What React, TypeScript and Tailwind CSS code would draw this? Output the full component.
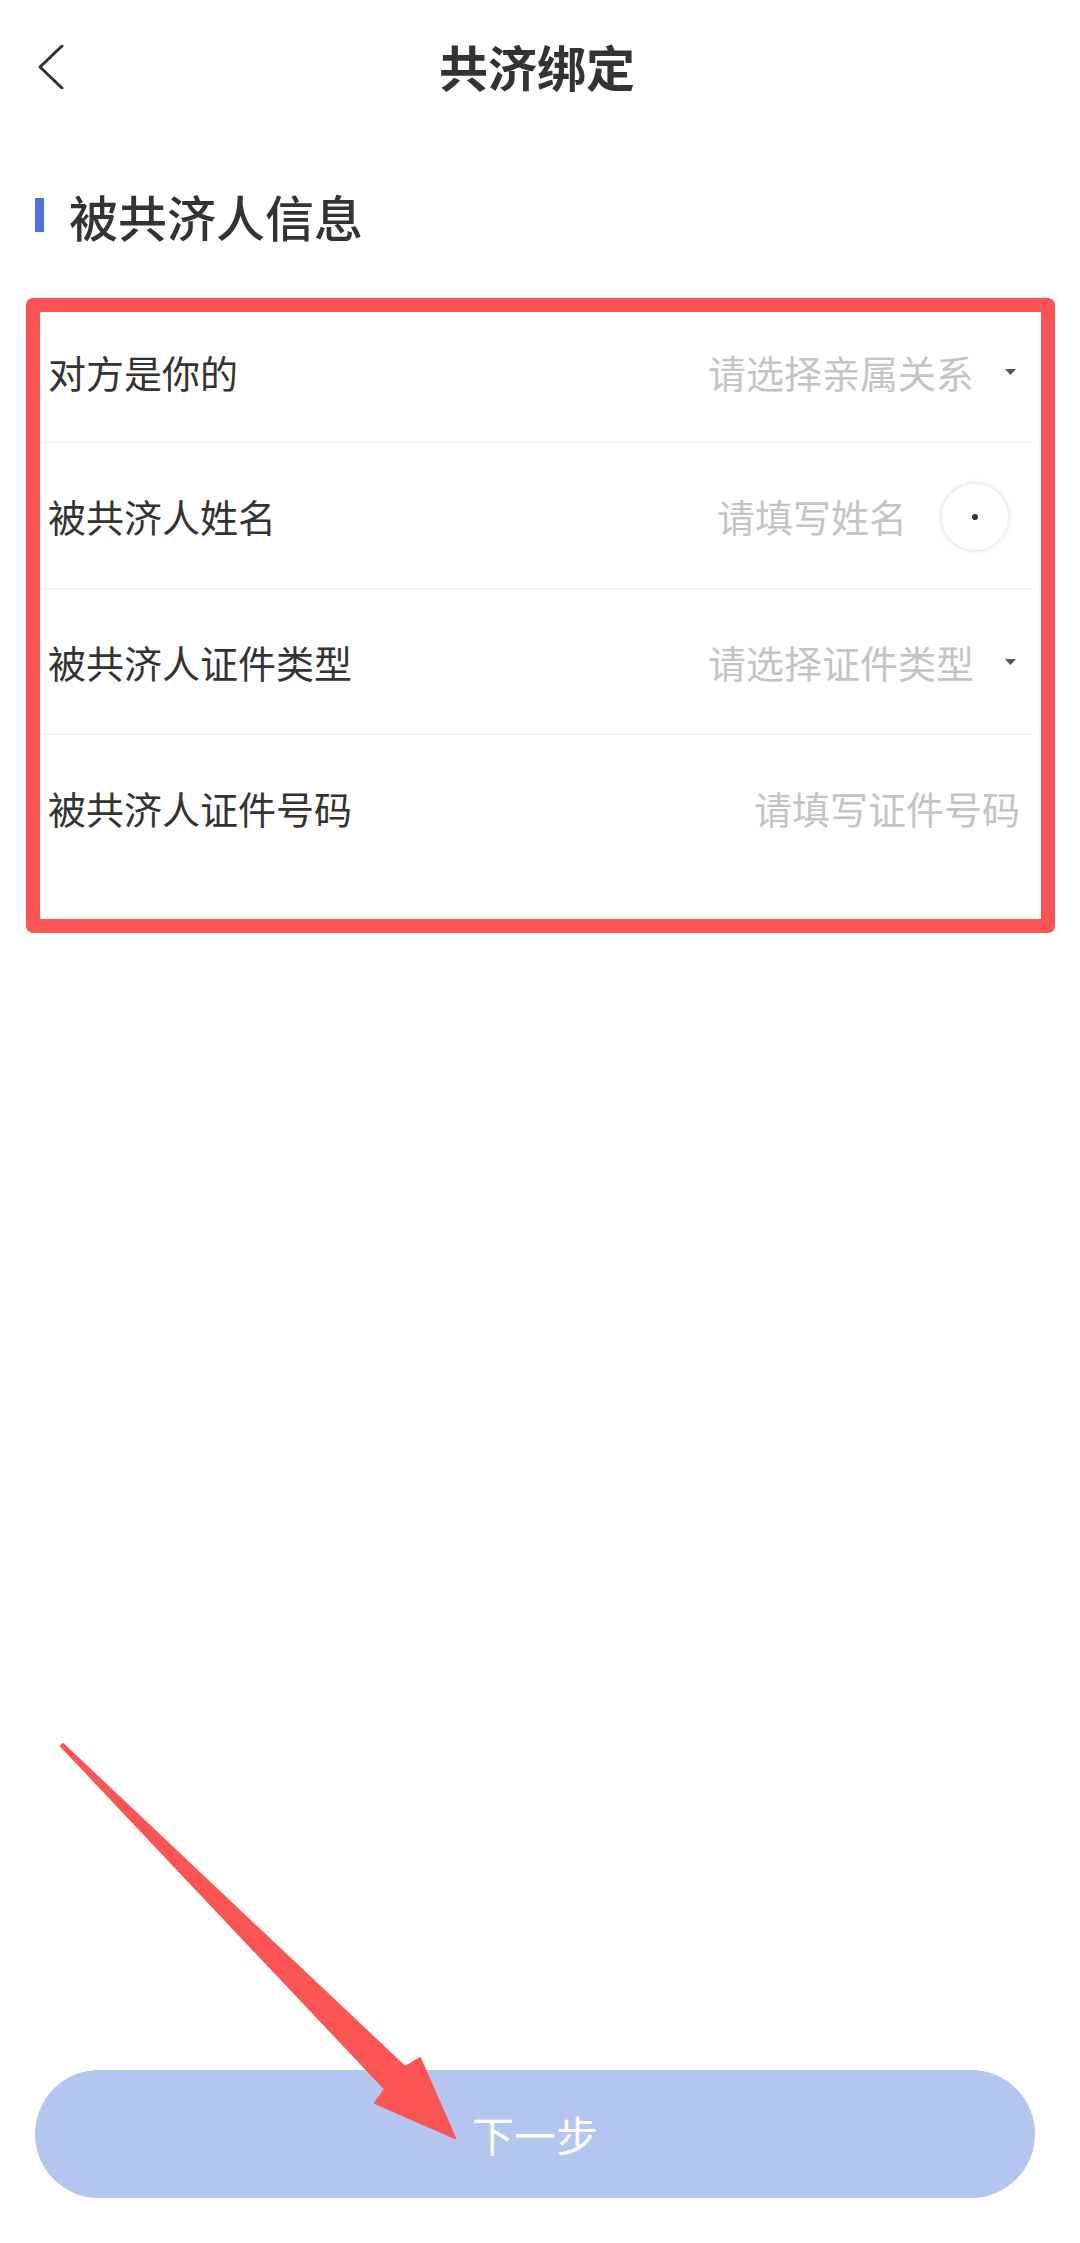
import React from 'react';

type Row = {
  label: string;
  placeholder: string;
  select?: boolean;
};

const rows: Row[] = [
  { label: '对方是你的', placeholder: '请选择亲属关系', select: true },
  { label: '被共济人姓名', placeholder: '请填写姓名' },
  { label: '被共济人证件类型', placeholder: '请选择证件类型', select: true },
  { label: '被共济人证件号码', placeholder: '请填写证件号码' },
];

function Caret() {
  return (
    <svg className="ml-[31px] mr-[4px] h-[6px] w-[11px]" viewBox="0 0 11 6">
      <path d="M0 0H11L5.5 6Z" fill="#555" />
    </svg>
  );
}

function FormRow({ row, index }: { row: Row; index: number }) {
  const first = index === 0;
  const last = index === rows.length - 1;
  return (
    <div
      className={`relative mr-[7px] flex items-center pl-[8px] pr-[14px] ${
        first ? 'h-[131px] pb-[10px]' : last ? 'h-[184px] pb-[38px]' : 'h-[146px]'
      } ${last ? '' : 'border-b border-[#efefef]'}`}
    >
      <span className="text-[38px] leading-none text-[#333]">{row.label}</span>
      <div className="ml-auto flex items-center">
        <span className={`text-[38px] leading-none text-[#c4c4c4] ${index === 1 ? 'mr-[113px]' : ''}`}>
          {row.placeholder}
        </span>
        {row.select && <Caret />}
      </div>
      {index === 1 && (
        // floating assistive button that sits over the name row
        <div className="absolute left-[900px] top-[39px] flex h-[70px] w-[70px] items-center justify-center rounded-full border-2 border-[#eeeef6] bg-white/70 shadow-[0_0_4px_rgba(200,200,230,0.35)]">
          <div className="h-[6px] w-[6px] rounded-full bg-[#333]" />
        </div>
      )}
    </div>
  );
}

export default function App() {
  return (
    <div className="relative flex h-[2243px] w-[1080px] flex-col bg-white font-['Noto_Sans_CJK_SC','Noto_Sans',sans-serif]">
      {/* Top bar */}
      <div className="relative flex h-[130px] items-center justify-center">
        <button className="absolute left-[38px] top-[45px]">
          <svg className="h-[44px] w-[26px]" viewBox="0 0 26 44" fill="none">
            <path d="M24 1L2 22L24 43" stroke="#333" strokeWidth={3} strokeLinecap="round" strokeLinejoin="round" />
          </svg>
        </button>
        <h1 className="mr-[6px] text-[49px] font-bold leading-none text-[#333]">共济绑定</h1>
      </div>

      {/* Section heading */}
      <div className="mt-[61px] flex h-[48px] items-center pl-[35px]">
        <div className="h-[34px] w-[9px] bg-[#4a72e0]" />
        <h2 className="ml-[25px] text-[49px] font-medium leading-none text-[#333]">被共济人信息</h2>
      </div>

      {/* Form */}
      <div className="ml-[26px] mt-[59px] w-[1029px] rounded-[7px] border-[14px] border-[#fc5454] bg-white">
        {rows.map((row, i) => (
          <FormRow key={row.label} row={row} index={i} />
        ))}
      </div>

      {/* Next step */}
      <div className="mt-auto pb-[45px] pl-[35px]">
        <button className="flex h-[128px] w-[1000px] items-center justify-center rounded-full bg-[#b4c5f0] text-[42px] leading-none text-white">
          下一步
        </button>
      </div>

      {/* Pointer arrow */}
      <svg className="pointer-events-none absolute left-0 top-0 h-[2243px] w-[1080px]" viewBox="0 0 1080 2243">
        <polygon
          points="63,1744 405,2067 420,2058 455,2138 375,2103 385,2089 61,1746"
          fill="#fb5454"
          strokeLinejoin="round"
          stroke="#fb5454"
          strokeWidth={2}
        />
      </svg>
    </div>
  );
}
